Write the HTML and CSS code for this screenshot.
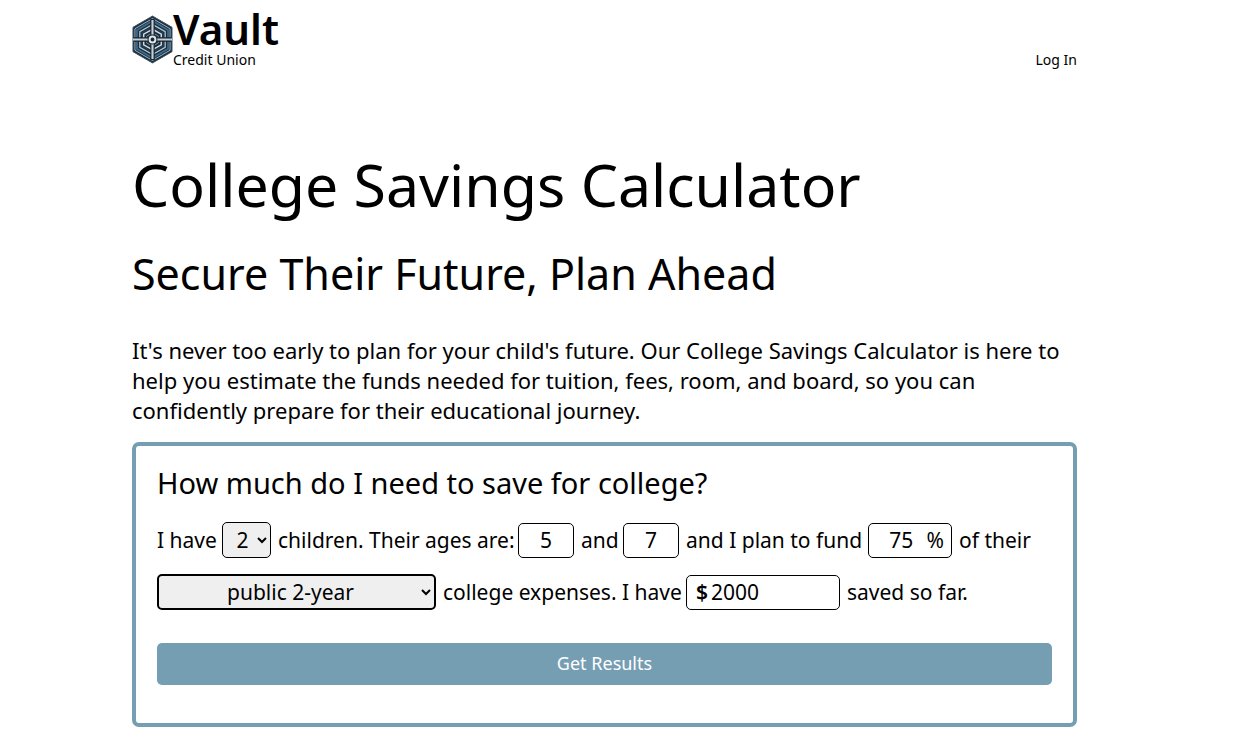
FILE: index.html
```html
<!DOCTYPE html>
<html lang="en">
<head>
<meta charset="utf-8">
<meta name="viewport" content="width=device-width, initial-scale=1">
<title>College Savings Calculator</title>
<link rel="stylesheet" href="styles.css">
</head>
<body>
<div class="page">
  <header class="header">
    <div class="brand">
      <svg class="brand-mark" viewBox="0 0 42 50" aria-hidden="true">
        <path d="M21 1 41 12.500V37.500L21 49 1 37.500V12.500Z" fill="#172e40" stroke="#42515e"/>
        <g fill="none">
          <path d="M21 3.500 39 14V36L21 46.500 3 36V14Z" stroke="#a9b4bd"/>
          <path d="M21 6 37 15.500V34.500L21 44 5 34.500V15.500Z" stroke="#39698a" stroke-width="2"/>
          <path d="M21 9.500 34 17V33L21 40.500 8 33V17Z" stroke="#b9c3ca" stroke-width="1.300"/>
          <path d="M21 12 32 18.500V31.500L21 38 10 31.500V18.500Z" stroke="#213f55" stroke-width="1.500"/>
          <path d="M21 14.500 30 19.500V30.500L21 35.500 12 30.500V19.500Z" stroke="#d5d9dc" stroke-width="1.500"/>
          <path d="M21 18 27 21.500V28.500L21 32 15 28.500V21.500Z" stroke="#7b8e9b"/>
          <path d="M21 4V46M2 25H40" stroke="#122332" stroke-width="4.500"/>
          <path d="M21 5V45M1 25H41" stroke="#c9cdd0" stroke-width="2.200"/>
        </g>
        <circle cx="21" cy="25" r="5" fill="#14283a"/>
        <circle cx="21" cy="25" r="3" fill="#14283a" stroke="#e2e5e7" stroke-width="2"/>
      </svg>
      <div class="brand-text">
        <span class="brand-name">Vault</span>
        <span class="brand-sub">Credit Union</span>
      </div>
    </div>
    <a class="login" href="#">Log In</a>
  </header>
  <main>
    <h1 class="title">College Savings Calculator</h1>
    <h2 class="subtitle">Secure Their Future, Plan Ahead</h2>
    <p class="intro">It's never too early to plan for your child's future. Our College Savings Calculator is here to help you estimate the funds needed for tuition, fees, room, and board, so you can confidently prepare for their educational journey.</p>
    <form class="calculator">
      <h3 class="question">How much do I need to save for college?</h3>
      <div class="sentence">
        <label class="phrase-have" for="children">I have</label>
        <select class="field count" id="children"><option>1</option><option selected>2</option><option>3</option></select>
        <label class="phrase-ages" for="age-one">children. Their ages are:</label>
        <input class="field age" id="age-one" value="5">
        <label class="phrase-and" for="age-two">and</label>
        <input class="field age" id="age-two" value="7">
        <label class="phrase-plan" for="percent">and I plan to fund</label>
        <span class="field percent"><input class="bare" id="percent" value="75"><span>%</span></span>
        <span>of their</span>
      </div>
      <div class="sentence">
        <select class="field school" aria-label="College type"><option>public 2-year</option><option>public 4-year</option><option>private 4-year</option></select>
        <label class="phrase-saved" for="saved">college expenses. I have</label>
        <span class="field saved"><span class="dollar">$</span><input class="bare" id="saved" value="2000"></span>
        <span>saved so far.</span>
      </div>
      <button class="submit" type="button">Get Results</button>
    </form>
  </main>
</div>
</body>
</html>
```
FILE: styles.css
```css
* { box-sizing: border-box; }
body {
  margin: 0;
  padding: 8px 171px 22px 132px;
  background: #fff;
  color: #000;
  font-family: "Noto Sans", sans-serif;
  font-size: 21px;
}
.header { display: flex; justify-content: space-between; align-items: flex-end; height: 62px; }
.brand { display: flex; align-items: center; }
.brand-mark { width: 41px; height: 49px; }
.brand-text { display: flex; flex-direction: column; }
.brand-name { font-size: 42px; line-height: 42px; font-weight: 600; }
.brand-sub { font-size: 14px; line-height: 20px; }
.login { color: #000; text-decoration: none; font-size: 14px; line-height: 20px; }
.title { margin: 74px 0 0; font-size: 59px; line-height: 80px; font-weight: 400; }
.subtitle { margin: 20px 0 0; font-size: 43px; line-height: 60px; font-weight: 400; }
.intro { margin: 31px 0 17px; font-size: 22px; line-height: 30px; }
.calculator { border: 4px solid #769eb3; border-radius: 7px; padding: 19px 21px 38px; }
.question { margin: 0 0 21px; font-size: 29px; line-height: 36px; font-weight: 400; }
.sentence { display: flex; align-items: center; gap: 7px; height: 36px; margin-bottom: 16px; line-height: 28px; white-space: nowrap; }
.phrase-have { width: 58px; }
.phrase-ages { width: 233px; }
.phrase-and { width: 35px; }
.phrase-plan { width: 175px; }
.phrase-saved { width: 236px; }
.field { height: 35px; border: 1px solid #000; border-radius: 5px; background: #fff; color: #000; font: inherit; text-align: center; flex: none; }
.count { width: 49px; height: 36px; padding: 0 0 0 4px; background: #efefef; }
.age { width: 56px; padding: 0; }
.percent { display: flex; align-items: center; width: 84px; padding: 0 7px; }
.bare { width: 100%; min-width: 0; padding: 0; border: 0; background: transparent; color: inherit; font: inherit; text-align: inherit; outline: 0; }
.school { width: 279px; height: 36px; border-width: 2px; background: #efefef; }
.saved { display: flex; align-items: center; gap: 3px; width: 154px; padding: 0 9px; text-align: left; }
.dollar { font-weight: 600; }
.submit { display: block; width: 100%; height: 42px; margin-top: 33px; padding: 0 0 3px; border: 0; border-radius: 5px; background: #769eb3; color: #fff; font: inherit; font-size: 18px; }
```
